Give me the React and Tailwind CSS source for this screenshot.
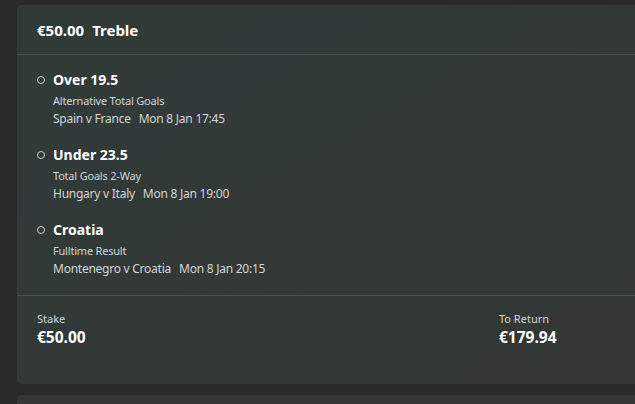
import React from "react";

const legs = [
  { pick: "Over 19.5", market: "Alternative Total Goals", match: "Spain v France", time: "Mon 8 Jan 17:45" },
  { pick: "Under 23.5", market: "Total Goals 2-Way", match: "Hungary v Italy", time: "Mon 8 Jan 19:00" },
  { pick: "Croatia", market: "Fulltime Result", match: "Montenegro v Croatia", time: "Mon 8 Jan 20:15" },
];

const Leg = ({ leg }) => (
  <div className="flex">
    <div className="w-[16px] pt-[6px]">
      <div className="w-[8px] h-[8px] rounded-full border border-[#c9cdcb]"></div>
    </div>
    <div>
      <div className="text-[14px] font-bold text-white leading-[19px]">{leg.pick}</div>
      <div className="text-[11px] text-[#d3d6d5] leading-[15px] mt-[4px] tracking-[-0.2px]">{leg.market}</div>
      <div className="text-[12px] text-[#d3d6d5] leading-[17px] mt-[2px] tracking-[-0.25px]">
        {leg.match}
        <span className="ml-[8px]">{leg.time}</span>
      </div>
    </div>
  </div>
);

const App = () => {
  return (
    <div
      className="w-[635px] h-[404px] overflow-hidden bg-[#2a2a2a] pt-[5px] pl-[17px]"
      style={{ fontFamily: '"Noto Sans", "Open Sans", sans-serif' }}
    >
      <div className="w-[640px] rounded-[5px] bg-gradient-to-br from-[#303b38] to-[#333736]">
        <div className="h-[50px] flex items-center px-[20px] pt-[1px] border-b border-[#4a534f]">
          <span className="text-[15px] font-bold text-white">€50.00</span>
          <span className="text-[15px] font-bold text-white ml-[8px]">Treble</span>
        </div>
        <div className="px-[20px] pt-[15px] pb-[18px] flex flex-col gap-[18px] border-b border-[#4a534f]">
          {legs.map((leg) => (
            <Leg key={leg.pick} leg={leg} />
          ))}
        </div>
        <div className="h-[88px] px-[20px] pt-[15px] flex">
          <div className="w-[462px]">
            <div className="text-[11px] text-[#d3d6d5] leading-[15px]">Stake</div>
            <div className="text-[15.5px] font-bold text-white leading-[20px] mt-[1px]">€50.00</div>
          </div>
          <div>
            <div className="text-[11px] text-[#d3d6d5] leading-[15px]">To Return</div>
            <div className="text-[15.5px] font-bold text-white leading-[20px] mt-[1px]">€179.94</div>
          </div>
        </div>
      </div>
      <div className="w-[640px] h-[40px] mt-[11px] rounded-[5px] bg-[#363636]"></div>
    </div>
  );
};

export default App;
